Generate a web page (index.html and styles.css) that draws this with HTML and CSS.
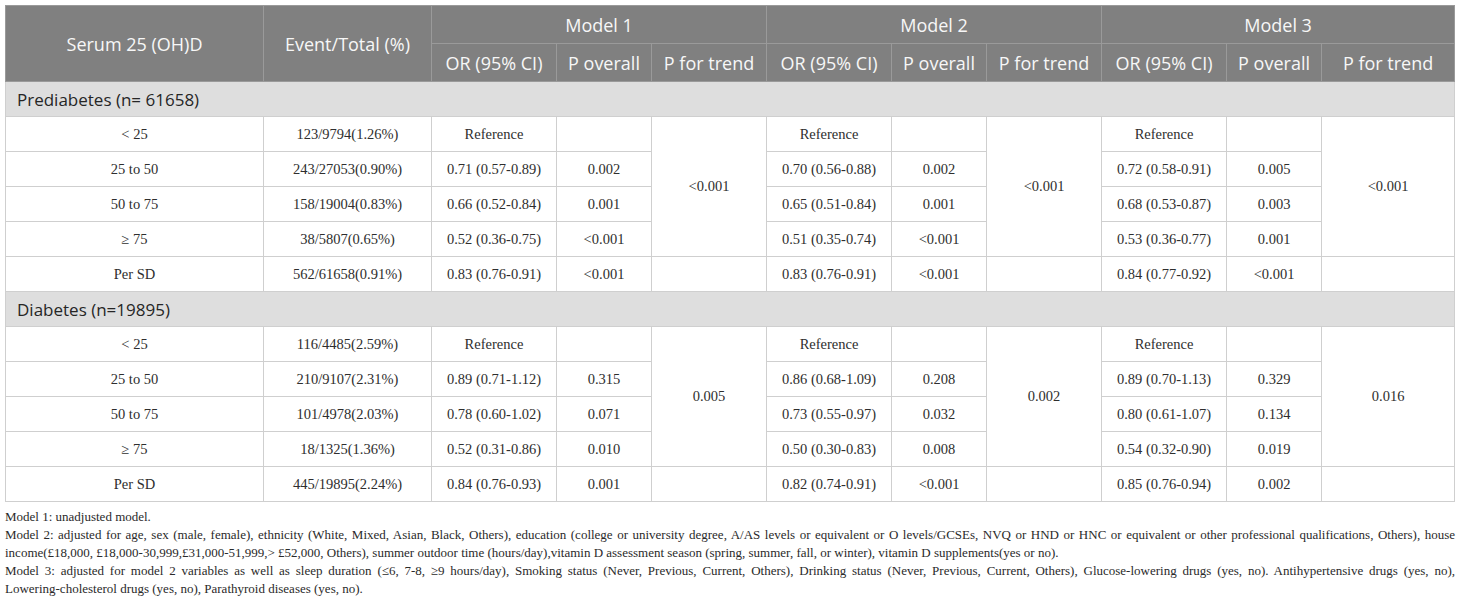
FILE: index.html
```html
<!DOCTYPE html>
<html lang="en">
<head>
    <meta charset="UTF-8">
    <title>Serum 25 (OH)D and risk</title>
    <link rel="stylesheet" href="styles.css">
</head>
<body>

<div class="wrap">
    <table class="results">
        <colgroup>
            <col class="c-level">
            <col class="c-event">
            <col class="c-or"><col class="c-p"><col class="c-trend">
            <col class="c-or"><col class="c-p"><col class="c-trend">
            <col class="c-or"><col class="c-p"><col class="c-trend3">
        </colgroup>
        <thead>
            <tr class="top">
                <th rowspan="2">Serum 25 (OH)D</th>
                <th rowspan="2">Event/Total (%)</th>
                <th colspan="3">Model 1</th>
                <th colspan="3">Model 2</th>
                <th colspan="3">Model 3</th>
            </tr>
            <tr class="sub">
                <th>OR (95% CI)</th><th>P overall</th><th>P for trend</th>
                <th>OR (95% CI)</th><th>P overall</th><th>P for trend</th>
                <th>OR (95% CI)</th><th>P overall</th><th>P for trend</th>
            </tr>
        </thead>
        <tbody>
            <!-- Prediabetes -->
            <tr class="group"><td colspan="11">Prediabetes (n= 61658)</td></tr>
            <tr>
                <td>&lt; 25</td><td>123/9794(1.26%)</td>
                <td>Reference</td><td></td><td rowspan="4">&lt;0.001</td>
                <td>Reference</td><td></td><td rowspan="4">&lt;0.001</td>
                <td>Reference</td><td></td><td rowspan="4">&lt;0.001</td>
            </tr>
            <tr>
                <td>25 to 50</td><td>243/27053(0.90%)</td>
                <td>0.71 (0.57-0.89)</td><td>0.002</td>
                <td>0.70 (0.56-0.88)</td><td>0.002</td>
                <td>0.72 (0.58-0.91)</td><td>0.005</td>
            </tr>
            <tr>
                <td>50 to 75</td><td>158/19004(0.83%)</td>
                <td>0.66 (0.52-0.84)</td><td>0.001</td>
                <td>0.65 (0.51-0.84)</td><td>0.001</td>
                <td>0.68 (0.53-0.87)</td><td>0.003</td>
            </tr>
            <tr>
                <td>&ge; 75</td><td>38/5807(0.65%)</td>
                <td>0.52 (0.36-0.75)</td><td>&lt;0.001</td>
                <td>0.51 (0.35-0.74)</td><td>&lt;0.001</td>
                <td>0.53 (0.36-0.77)</td><td>0.001</td>
            </tr>
            <tr>
                <td>Per SD</td><td>562/61658(0.91%)</td>
                <td>0.83 (0.76-0.91)</td><td>&lt;0.001</td><td></td>
                <td>0.83 (0.76-0.91)</td><td>&lt;0.001</td><td></td>
                <td>0.84 (0.77-0.92)</td><td>&lt;0.001</td><td></td>
            </tr>

            <!-- Diabetes -->
            <tr class="group"><td colspan="11">Diabetes (n=19895)</td></tr>
            <tr>
                <td>&lt; 25</td><td>116/4485(2.59%)</td>
                <td>Reference</td><td></td><td rowspan="4">0.005</td>
                <td>Reference</td><td></td><td rowspan="4">0.002</td>
                <td>Reference</td><td></td><td rowspan="4">0.016</td>
            </tr>
            <tr>
                <td>25 to 50</td><td>210/9107(2.31%)</td>
                <td>0.89 (0.71-1.12)</td><td>0.315</td>
                <td>0.86 (0.68-1.09)</td><td>0.208</td>
                <td>0.89 (0.70-1.13)</td><td>0.329</td>
            </tr>
            <tr>
                <td>50 to 75</td><td>101/4978(2.03%)</td>
                <td>0.78 (0.60-1.02)</td><td>0.071</td>
                <td>0.73 (0.55-0.97)</td><td>0.032</td>
                <td>0.80 (0.61-1.07)</td><td>0.134</td>
            </tr>
            <tr>
                <td>&ge; 75</td><td>18/1325(1.36%)</td>
                <td>0.52 (0.31-0.86)</td><td>0.010</td>
                <td>0.50 (0.30-0.83)</td><td>0.008</td>
                <td>0.54 (0.32-0.90)</td><td>0.019</td>
            </tr>
            <tr>
                <td>Per SD</td><td>445/19895(2.24%)</td>
                <td>0.84 (0.76-0.93)</td><td>0.001</td><td></td>
                <td>0.82 (0.74-0.91)</td><td>&lt;0.001</td><td></td>
                <td>0.85 (0.76-0.94)</td><td>0.002</td><td></td>
            </tr>
        </tbody>
    </table>

    <div class="notes">
        <p>Model 1: unadjusted model.</p>
        <p>Model 2: adjusted for age, sex (male, female), ethnicity (White, Mixed, Asian, Black, Others), education (college or university degree, A/AS levels or equivalent or O levels/GCSEs, NVQ or HND or HNC or equivalent or other professional qualifications, Others), house income(£18,000, £18,000-30,999,£31,000-51,999,&gt; £52,000, Others), summer outdoor time (hours/day),vitamin D assessment season (spring, summer, fall, or winter), vitamin D supplements(yes or no).</p>
        <p>Model 3: adjusted for model 2 variables as well as sleep duration (&le;6, 7-8, &ge;9 hours/day), Smoking status (Never, Previous, Current, Others), Drinking status (Never, Previous, Current, Others), Glucose-lowering drugs (yes, no). Antihypertensive drugs (yes, no), <span class="nw">Lowering-cholesterol</span> drugs (yes, no), Parathyroid diseases (yes, no).</p>
    </div>
</div>

</body>
</html>
```

FILE: styles.css
```css
body {
    margin: 0;
    padding: 0;
    background-color: #fff;
    color: #333;
    font-family: "Liberation Serif", "Times New Roman", serif;
}

.wrap {
    padding: 5px 6px 5px 5px;
}

.results {
    width: 1449px;
    border-collapse: collapse;
    table-layout: fixed;
}

.c-level { width: 258px; }
.c-event { width: 168px; }
.c-or { width: 125px; }
.c-p { width: 95px; }
.c-trend { width: 115px; }
.c-trend3 { width: 133px; }

/* Cabecera gris */
.results th {
    background-color: #808080;
    color: #f7f7f7;
    font-family: "Open Sans", "Noto Sans", sans-serif;
    font-size: 18px;
    font-weight: normal;
    border: 1px solid #9a9a9a;
    padding: 0;
    text-align: center;
}

.results tr.top th {
    height: 37px;
}

.results tr.sub th {
    height: 37px;
}

.results td {
    border: 1px solid #cfcfcf;
    height: 34px;
    padding: 0;
    text-align: center;
    font-size: 14.5px;
    color: #2e2e2e;
}

.results tr.group td {
    background-color: #dedede;
    text-align: left;
    padding-left: 11px;
    font-family: "Open Sans", "Noto Sans", sans-serif;
    font-size: 17px;
    color: #262626;
    height: 34px;
}

/* Notas al pie */
.notes {
    margin-top: 6px;
    width: 1450px;
    font-size: 13px;
    line-height: 18px;
    color: #2a2a2a;
    text-align: justify;
}

.notes p {
    margin: 0;
}

.nw {
    white-space: nowrap;
}
```
